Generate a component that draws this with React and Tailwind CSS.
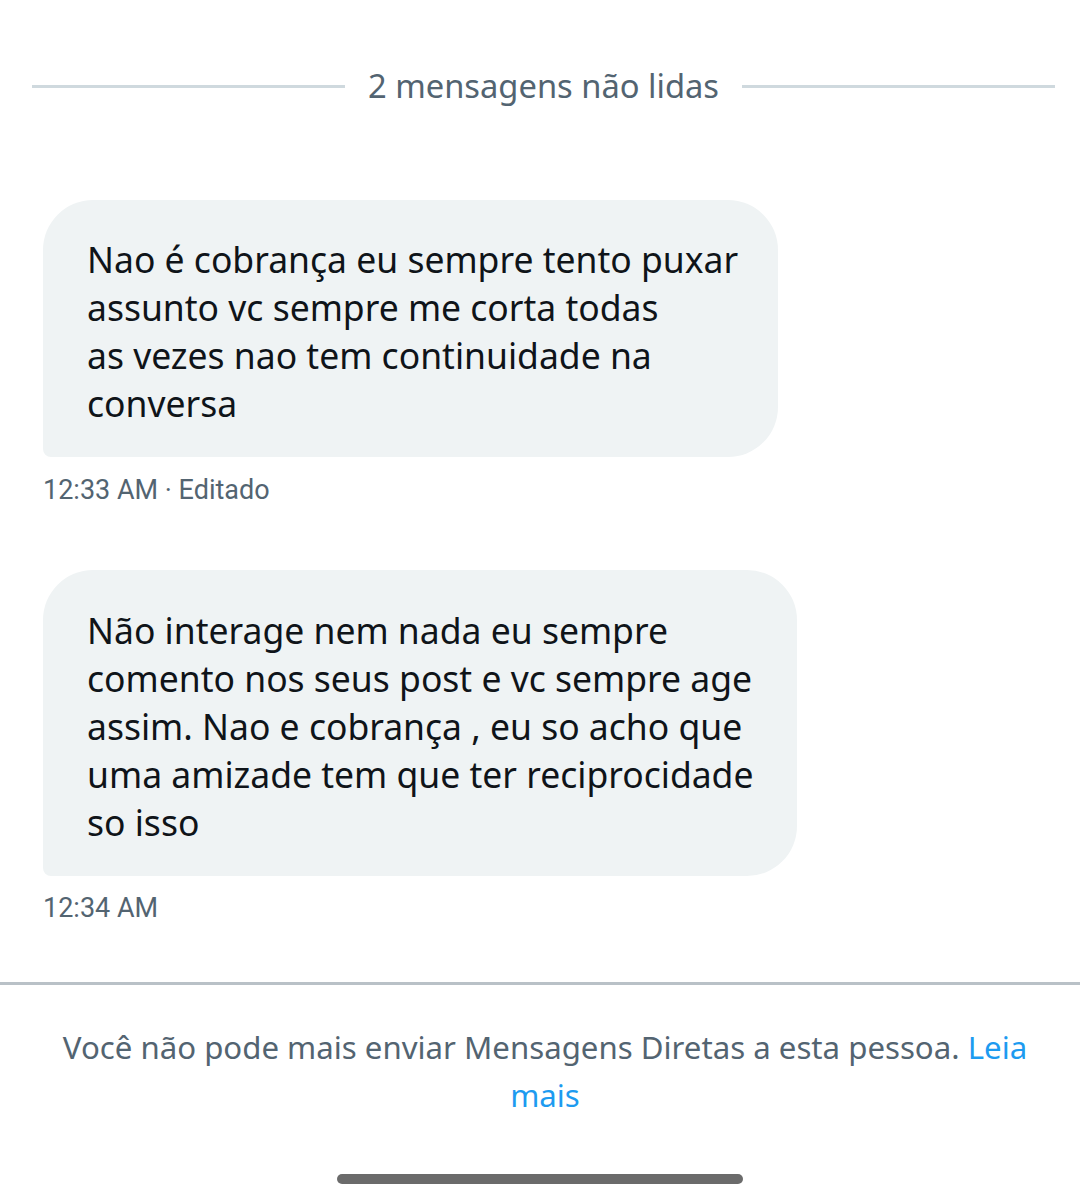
export default function App() {
  return (
    <div className="w-[1080px] h-[1200px] bg-white flex flex-col relative overflow-hidden" style={{ fontFamily: '"Noto Sans", "Open Sans", sans-serif' }}>
      <div className="flex items-center pl-[32px] pr-[25px] mt-[64px] h-[44px]">
        <div className="flex-1 h-[3px] bg-[#cfd9de]" />
        <div className="px-[23px] text-[32.7px] leading-[44px] text-[#536471]">2 mensagens não lidas</div>
        <div className="flex-1 h-[3px] bg-[#cfd9de]" />
      </div>

      <div className="flex flex-col px-[43px] mt-[92px]">
        <div className="w-[735px] bg-[#eff3f4] rounded-[50px] rounded-bl-[8px] pl-[44px] pr-[20px] pt-[35px] pb-[30px] text-[35.5px] leading-[48px] text-[#0f1419]">
          Nao é cobrança eu sempre tento puxar<br />
          assunto vc sempre me corta todas<br />
          as vezes nao tem continuidade na<br />
          conversa
        </div>
        <div className="mt-[17px] text-[27px] leading-[32px] text-[#536471]" style={{ fontFamily: 'Roboto, "Liberation Sans", sans-serif' }}>
          12:33 AM · Editado
        </div>

        <div className="mt-[64px] w-[754px] bg-[#eff3f4] rounded-[50px] rounded-bl-[8px] pl-[44px] pr-[20px] pt-[36px] pb-[30px] text-[35.5px] leading-[48px] text-[#0f1419]">
          Não interage nem nada eu sempre<br />
          comento nos seus post e vc sempre age<br />
          assim. Nao e cobrança , eu so acho que<br />
          uma amizade tem que ter reciprocidade<br />
          so isso
        </div>
        <div className="mt-[16px] text-[27px] leading-[32px] text-[#536471]" style={{ fontFamily: 'Roboto, "Liberation Sans", sans-serif' }}>
          12:34 AM
        </div>
      </div>

      <div className="mt-[58px] h-[3px] bg-[#b9c1c7]" />

      <div className="mt-[38px] pl-[10px] text-center text-[31.2px] leading-[48px] text-[#536471]">
        Você não pode mais enviar Mensagens Diretas a esta pessoa. <span className="text-[#1d9bf0]">Leia</span><br />
        <span className="text-[#1d9bf0]">mais</span>
      </div>

      <div className="absolute left-[337px] top-[1174px] w-[406px] h-[10px] rounded-full bg-[#6b6b6b]" />
    </div>
  );
}
